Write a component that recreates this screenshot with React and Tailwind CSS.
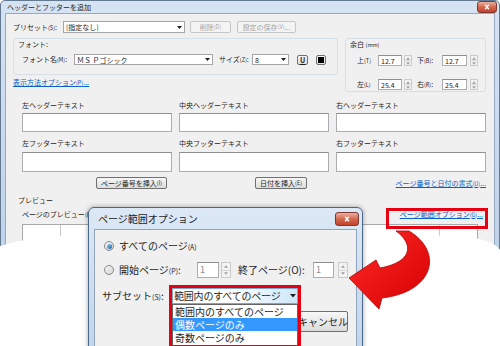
import React from 'react';

// ヘッダーとフッターを追加 + ページ範囲オプション (Windows 7 style composite)

const Mn = ({ c, s = 'text-[5.5px]' }) => <span className={s}>({c})</span>;

function Down({ w = 5, color = '#1e1e1e' }) {
  return (
    <svg width={w} height={w * 0.6} viewBox="0 0 10 6">
      <path d="M0 0h10L5 6z" fill={color} />
    </svg>
  );
}

function Sel({ className = '', children, text = 'text-[7px]', arrow = 5 }) {
  return (
    <div className={`flex items-center bg-white border border-[#a6a6a6] ${className}`}>
      <span className={`flex-1 pl-[2px] whitespace-nowrap overflow-hidden ${text}`}>{children}</span>
      <span className="w-[10px] flex justify-center">
        <Down w={arrow} />
      </span>
    </div>
  );
}

function Btn({ className = '', children, disabled }) {
  return (
    <div
      className={`flex items-center justify-center whitespace-nowrap rounded-[2px] border ${
        disabled
          ? 'border-[#c6c6c6] bg-[#f4f4f4] text-[#a6a6a6]'
          : 'border-[#707070] bg-gradient-to-b from-[#f7f7f7] to-[#dcdcdc] text-[#1e1e1e]'
      } ${className}`}
    >
      {children}
    </div>
  );
}

function Spin({ className = '' }) {
  return (
    <div className={`flex flex-col border border-[#cbcbcb] bg-[#f3f3f3] ${className}`}>
      <div className="flex-1 flex items-center justify-center border-b border-[#d6d6d6]">
        <svg viewBox="0 0 10 6" className="w-[4px] h-[3px]">
          <path d="M0 6h10L5 0z" fill="#a0a0a0" />
        </svg>
      </div>
      <div className="flex-1 flex items-center justify-center">
        <svg viewBox="0 0 10 6" className="w-[4px] h-[3px]">
          <path d="M0 0h10L5 6z" fill="#a0a0a0" />
        </svg>
      </div>
    </div>
  );
}

function Inp({ className = '', children, text = 'text-[7px]' }) {
  return (
    <div className={`flex items-center bg-white border border-[#abadb3] border-t-[#8e8f8f] pl-[2px] ${text} ${className}`}>
      {children}
    </div>
  );
}

function Close({ className = '' }) {
  return (
    <div
      className={`flex items-center justify-center rounded-[3px] border border-[#7d3a30] bg-gradient-to-b from-[#eab0a3] via-[#d5684f] to-[#c2402a] ${className}`}
    >
      <svg viewBox="0 0 10 8" className="w-[8px] h-[6px]">
        <path d="M2.5 1l5 6M7.5 1l-5 6" stroke="#fff" strokeWidth="1.8" />
      </svg>
    </div>
  );
}

function Radio({ on }) {
  return (
    <div className="w-[10px] h-[10px] rounded-full border border-[#8b8b8b] bg-gradient-to-br from-[#f4f4f4] to-[#d6d6d6] flex items-center justify-center">
      {on && <div className="w-[5px] h-[5px] rounded-full bg-gradient-to-br from-[#8fd0f4] to-[#1f5f9f]" />}
    </div>
  );
}

const Link = ({ children, className = '' }) => (
  <span className={`text-[#0b5fc6] underline ${className}`}>{children}</span>
);

function MainWindow() {
  return (
    <div className="h-[258px] rounded-t-[5px] border border-[#62798f] bg-gradient-to-b from-[#d6e3f2] to-[#bfd2e9] px-[4px] flex flex-col">
      <div className="h-[17px] flex items-center justify-between pl-[2px]">
        <span className="text-[7px] text-[#1e1e1e]">ヘッダーとフッターを追加</span>
        <Close className="w-[20px] h-[12px] -mr-[2px]" />
      </div>

      <div className="flex-1 bg-[#f0f0f0] border border-[#95a9c1] pl-[7px] pr-[4px] pt-[7px] text-[7px] leading-[8px] text-[#1e1e1e]">
        {/* preset */}
        <div className="flex items-center h-[12px]">
          <span className="w-[50px] whitespace-nowrap">プリセット<Mn c="S" />:</span>
          <Sel className="w-[122px] h-[12px]">[指定なし]</Sel>
          <Btn disabled className="ml-[5px] w-[41px] h-[12px]">削除<Mn c="D" /></Btn>
          <Btn disabled className="ml-[6px] w-[59px] h-[12px]">設定の保存<Mn c="V" />...</Btn>
        </div>

        {/* font + margins */}
        <div className="flex mt-[5px]">
          <div className="w-[325px]">
            <div className="h-[37px] border border-[#d5dfe5] rounded-[3px] pl-[4px] pt-[1px]">
              <div>フォント:</div>
              <div className="flex items-center h-[11px] mt-[6px] pl-[4px]">
                <span className="w-[52px] whitespace-nowrap">フォント名<Mn c="M" />:</span>
                <Sel className="w-[139px] h-[11px]">ＭＳ Ｐゴシック</Sel>
                <span className="ml-[6px] w-[33px] whitespace-nowrap">サイズ<Mn c="Z" />:</span>
                <Sel className="w-[37px] h-[11px]">8</Sel>
                <Btn className="ml-[8px] w-[11px] h-[10px] font-bold text-[7px]">
                  <span className="underline">U</span>
                </Btn>
                <Btn className="ml-[8px] w-[10px] h-[10px]">
                  <div className="w-[6px] h-[6px] bg-black" />
                </Btn>
              </div>
            </div>
            <div className="mt-[3px]">
              <Link>表示方法オプション<Mn c="P" />...</Link>
            </div>
          </div>

          <div className="ml-[7px] w-[141px] h-[54px] border border-[#d5dfe5] rounded-[3px] pl-[4px] pt-[1px]">
            <div>余白 <span className="text-[5.5px]">(mm)</span></div>
            {[
              ['上', 'T', '12.7', '下', 'B', '12.7'],
              ['左', 'L', '25.4', '右', 'R', '25.4'],
            ].map((r, i) => (
              <div key={i} className={`flex items-center h-[11px] pl-[7px] ${i ? 'mt-[13px]' : 'mt-[6px]'}`}>
                <span className="w-[21px] whitespace-nowrap">{r[0]}<Mn c={r[1]} /></span>
                <Inp className="w-[24px] h-[11px] text-[6px]">{r[2]}</Inp>
                <Spin className="ml-[2px] w-[8px] h-[11px]" />
                <span className="ml-[5px] w-[25px] whitespace-nowrap">{r[3]}<Mn c={r[4]} />:</span>
                <Inp className="w-[25px] h-[11px] text-[6px]">{r[5]}</Inp>
                <Spin className="ml-[3px] w-[8px] h-[11px]" />
              </div>
            ))}
          </div>
        </div>

        {/* header / footer text */}
        <div className="ml-[9px] mt-[9px] flex gap-[7px]">
          {['左', '中央', '右'].map((p) => (
            <div key={p} className="w-[150px] flex flex-col">
              <span className="h-[8px] whitespace-nowrap">{p}ヘッダーテキスト</span>
              <Inp className="mt-[4px] h-[19px]" />
              <span className="mt-[7px] h-[8px] whitespace-nowrap">{p}フッターテキスト</span>
              <Inp className="mt-[5px] h-[20px]" />
            </div>
          ))}
        </div>

        <div className="ml-[9px] mt-[5px] h-[12px] flex items-center">
          <Btn className="ml-[74px] w-[71px] h-[12px]">ページ番号を挿入<Mn c="I" /></Btn>
          <Btn className="ml-[88px] w-[52px] h-[12px]">日付を挿入<Mn c="E" /></Btn>
          <Link className="ml-auto mr-[4px] whitespace-nowrap">ページ番号と日付の書式<Mn c="U" />...</Link>
        </div>

        {/* preview */}
        <div className="ml-[5px] mt-[7px]">プレビュー</div>
        <div className="ml-[9px] mt-[6px] flex items-center h-[8px]">
          <span className="whitespace-nowrap">ページのプレビュー<Mn c="B" /></span>
          <Link className="ml-auto mr-[7px] whitespace-nowrap">ページ範囲オプション<Mn c="G" />...</Link>
        </div>
        <div className="ml-[9px] mt-[6px] w-[456px] h-[40px] bg-white border border-[#a9a9a9] flex">
          <div className="w-[38px] border-r border-[#c8c8c8]" />
          <div className="flex-1" />
          <div className="w-[38px] border-l border-[#c8c8c8]" />
        </div>
      </div>
    </div>
  );
}

function RangeDialog() {
  return (
    <div className="absolute left-[88px] top-[207px] w-[275px] h-[150px] rounded-t-[6px] border border-[#4c6888] bg-gradient-to-b from-[#dce8f5] to-[#c1d4ea] px-[5px] flex flex-col text-[10px] leading-[12px] text-[#1e1e1e] shadow-[0_0_5px_rgba(0,0,0,0.35)]">
      <div className="h-[21px] flex items-center justify-between pl-[4px]">
        <span className="text-[10px]">ページ範囲オプション</span>
        <Close className="w-[24px] h-[14px] -mr-[2px]" />
      </div>
      <div className="flex-1 bg-[#f0f0f0] border border-[#8fa4bd] pl-[9px] pr-[7px] pt-[10px]">
        <div className="flex items-center h-[12px]">
          <Radio on />
          <span className="ml-[5px] whitespace-nowrap">すべてのページ<Mn c="A" s="text-[7px]" /></span>
        </div>
        <div className="flex items-center h-[16px] mt-[10px]">
          <Radio />
          <span className="ml-[5px] w-[78px] whitespace-nowrap">開始ページ<Mn c="P" s="text-[7px]" />:</span>
          <Inp className="w-[22px] h-[16px] text-[#8a8a8a]" text="text-[9px]">1</Inp>
          <Spin className="ml-[2px] w-[10px] h-[16px]" />
          <span className="ml-[7px] w-[75px] whitespace-nowrap">終了ページ(O):</span>
          <Inp className="w-[21px] h-[16px] text-[#8a8a8a]" text="text-[9px]">1</Inp>
          <Spin className="ml-[4px] w-[10px] h-[16px]" />
        </div>
        <div className="flex items-center h-[16px] mt-[10px] -ml-[2px]">
          <span className="w-[70px] whitespace-nowrap">サブセット<Mn c="S" s="text-[7px]" />:</span>
          <div className="w-[126px] h-[16px] flex items-center border border-[#7aa7d1] bg-gradient-to-r from-white via-white to-[#cde6f8]">
            <span className="flex-1 pl-[1px] whitespace-nowrap tracking-[-0.2px]">範囲内のすべてのページ</span>
            <span className="w-[9px] flex justify-center">
              <Down w={6} />
            </span>
          </div>
        </div>
        <div className="flex justify-end mt-[7px] pr-[1px]">
          <Btn className="w-[50px] h-[21px]" />
          <Btn className="ml-[6px] w-[50px] h-[21px]">キャンセル</Btn>
        </div>
      </div>
    </div>
  );
}

function DropList() {
  const items = ['範囲内のすべてのページ', '偶数ページのみ', '奇数ページのみ'];
  return (
    <div className="absolute left-[172px] top-[304px] w-[126px] h-[42px] bg-white border border-[#646464] text-[10px] leading-[13px] text-[#1e1e1e]">
      {items.map((t, i) => (
        <div key={t} className={`h-[13px] pl-[2px] whitespace-nowrap ${i === 1 ? 'bg-[#3399ff] text-white' : ''}`}>
          {t}
        </div>
      ))}
    </div>
  );
}

export default function App() {
  return (
    <div className="relative w-[500px] h-[346px] bg-white overflow-hidden font-['Noto_Sans_CJK_JP','Noto_Sans',sans-serif]">
      <MainWindow />

      {/* torn edge of the main dialog */}
      <svg className="absolute left-0 top-0 pointer-events-none" width="500" height="346" viewBox="0 0 500 346">
        <path
          d="M0 246 C30 237 70 233 130 235 C250 239 380 233 450 236 C480 237 495 242 500 250 L500 346 L0 346 Z"
          fill="#fff"
        />
      </svg>

      <div className="absolute left-[386px] top-[208px] w-[102px] h-[21px] border-[3px] border-[#e60012]" />

      <RangeDialog />
      <DropList />
      <div className="absolute left-[169px] top-[285px] w-[132px] h-[63px] border-[3px] border-[#e60012]" />

      {/* curved red arrow */}
      <svg className="absolute left-0 top-0 pointer-events-none" width="500" height="346" viewBox="0 0 500 346">
        <defs>
          <linearGradient id="ag" x1="0" y1="0" x2="1" y2="1">
            <stop offset="0" stopColor="#ff2a2a" />
            <stop offset="1" stopColor="#d40000" />
          </linearGradient>
        </defs>
        <path
          d="M396 231 C414 244 413 262 380 268 L376 260 L349 278 L379 309 L382 298 C434 292 444 252 409 231 Z"
          fill="url(#ag)"
          stroke="#b80000"
          strokeWidth="0.8"
        />
      </svg>
    </div>
  );
}
